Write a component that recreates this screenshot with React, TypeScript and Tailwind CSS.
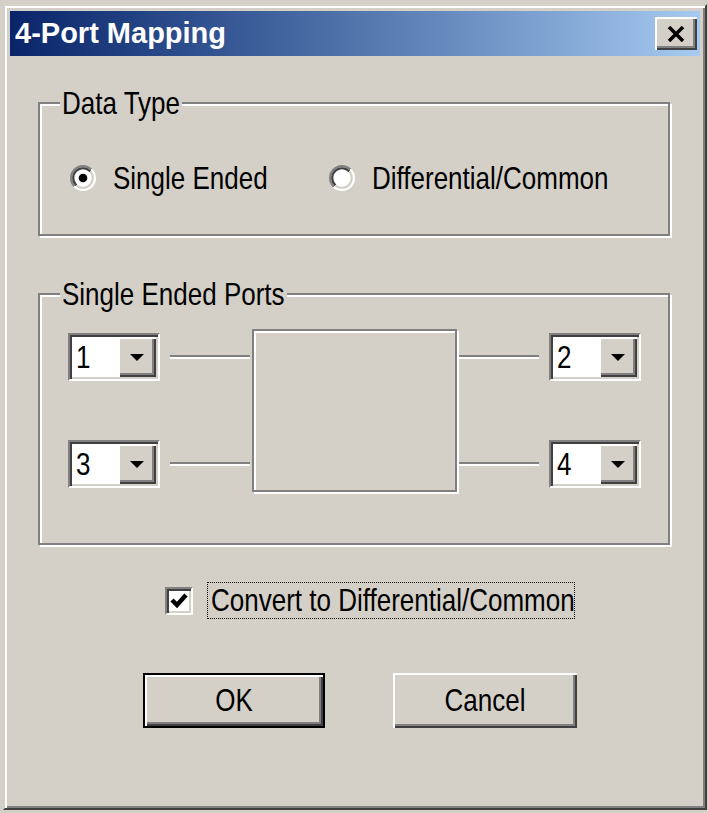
import React from 'react';

const txt = "inline-block scale-y-[1.22]";

function Radio({ checked }: { checked: boolean }) {
  return (
    <svg width="26" height="26" viewBox="0 0 12 12" className="shrink-0">
      <defs>
        <linearGradient id="ro" x1="0" y1="0" x2="1" y2="1">
          <stop offset="0.5" stopColor="#808080" />
          <stop offset="0.5" stopColor="#ffffff" />
        </linearGradient>
        <linearGradient id="ri" x1="0" y1="0" x2="1" y2="1">
          <stop offset="0.5" stopColor="#404040" />
          <stop offset="0.5" stopColor="#d4d0c8" />
        </linearGradient>
      </defs>
      <circle cx="6" cy="6" r="5.5" fill="#fff" stroke="url(#ro)" strokeWidth="1" />
      <circle cx="6" cy="6" r="4.5" fill="#fff" stroke="url(#ri)" strokeWidth="1" />
      {checked && <circle cx="6" cy="6" r="2" fill="#000" />}
    </svg>
  );
}

function Group({ label, className, children }: { label: string; className: string; children: React.ReactNode }) {
  return (
    <div className={"relative border-2 border-[#808080] shadow-[inset_2px_2px_0_#fff,2px_2px_0_#fff] " + className}>
      <span className="absolute left-[20px] top-[-16px] bg-[#d4d0c8] px-[2px] leading-[30px]">
        <span className={txt}>{label}</span>
      </span>
      {children}
    </div>
  );
}

function Combo({ value }: { value: string }) {
  return (
    <div className="flex w-[92px] h-[48px] border-2 border-t-[#808080] border-l-[#808080] border-r-white border-b-white bg-white shadow-[inset_2px_2px_0_#404040,inset_-2px_-2px_0_#d4d0c8] p-[2px]">
      <div className="flex-1 flex items-center pl-[4px] leading-none">
        <span className={txt}>{value}</span>
      </div>
      <div className="w-[38px] flex items-center justify-center bg-[#d4d0c8] shadow-[inset_2px_2px_0_#fff,inset_-2px_-2px_0_#404040,inset_-4px_-4px_0_#808080]">
        <svg width="14" height="7" viewBox="0 0 14 7">
          <polygon points="0,0 14,0 7,7" fill="#000" />
        </svg>
      </div>
    </div>
  );
}

function Line() {
  return <div className="w-[80px] h-[4px] border-t-2 border-[#808080] border-b-2 border-b-white" />;
}

export default function App() {
  return (
    <div className="w-[708px] h-[813px] bg-[#d4d0c8] pt-[4px] pl-[3px] font-['Liberation_Sans',Arial,sans-serif] text-[26px] text-black">
      <div className="w-[704px] h-[806px] border-2 border-t-[#d4d0c8] border-l-[#d4d0c8] border-r-[#404040] border-b-[#404040] shadow-[inset_2px_2px_0_#fff,inset_-2px_-2px_0_#808080] p-[5px] flex flex-col">
        {/* title bar */}
        <div className="h-[45px] flex items-center justify-between bg-linear-to-r from-[#0a246a] to-[#a6caf0] pl-[5px] pr-[3px]">
          <span className="text-white font-bold text-[29px] leading-none">4-Port Mapping</span>
          <div className="w-[42px] h-[33px] flex items-center justify-center bg-[#d4d0c8] shadow-[inset_2px_2px_0_#fff,inset_-2px_-2px_0_#404040,inset_-4px_-4px_0_#808080]">
            <svg width="18" height="16" viewBox="0 0 18 16">
              <path d="M2 1 L16 15 M16 1 L2 15" stroke="#000" strokeWidth="3.5" />
            </svg>
          </div>
        </div>

        <Group label="Data Type" className="ml-[28px] mt-[46px] w-[632px] h-[134px] pt-[59px] pl-[30px]">
          <div className="flex items-center h-[30px]">
            <div className="w-[259px] flex items-center gap-[17px]">
              <Radio checked />
              <span className={txt}>Single Ended</span>
            </div>
            <div className="flex items-center gap-[17px]">
              <Radio checked={false} />
              <span className={txt}>Differential/Common</span>
            </div>
          </div>
        </Group>

        <Group label="Single Ended Ports" className="ml-[28px] mt-[57px] w-[632px] h-[252px] pt-[34px] pl-[28px]">
          <div className="flex items-center">
            <div className="flex flex-col gap-[59px]">
              <div className="flex items-center gap-[10px]">
                <Combo value="1" />
                <Line />
              </div>
              <div className="flex items-center gap-[10px]">
                <Combo value="3" />
                <Line />
              </div>
            </div>
            <div className="ml-[2px] w-[205px] h-[163px] border-2 border-[#808080] shadow-[inset_2px_2px_0_#fff,2px_2px_0_#fff]" />
            <div className="ml-[2px] flex flex-col gap-[59px]">
              <div className="flex items-center gap-[10px]">
                <Line />
                <Combo value="2" />
              </div>
              <div className="flex items-center gap-[10px]">
                <Line />
                <Combo value="4" />
              </div>
            </div>
          </div>
        </Group>

        <div className="ml-[155px] mt-[37px] flex items-center gap-[14px]">
          <div className="w-[28px] h-[28px] flex items-center justify-center border-2 border-t-[#808080] border-l-[#808080] border-r-white border-b-white bg-white shadow-[inset_2px_2px_0_#404040,inset_-2px_-2px_0_#d4d0c8]">
            <svg width="18" height="16" viewBox="0 0 18 16">
              <path d="M2 7 L7 12 L16 2" stroke="#000" strokeWidth="4.5" fill="none" />
            </svg>
          </div>
          <div className="w-[368px] h-[37px] border border-dotted border-black overflow-hidden whitespace-nowrap pl-[3px] flex items-center">
            <span className={txt}>Convert to Differential/Common</span>
          </div>
        </div>

        <div className="ml-[133px] mt-[54px] flex gap-[68px]">
          <div className="w-[182px] h-[55px] border-2 border-black flex items-center justify-center shadow-[inset_2px_2px_0_#fff,inset_-2px_-2px_0_#404040,inset_-4px_-4px_0_#808080]">
            <span className={txt}>OK</span>
          </div>
          <div className="w-[184px] h-[55px] flex items-center justify-center shadow-[inset_2px_2px_0_#fff,inset_-2px_-2px_0_#404040,inset_-4px_-4px_0_#808080]">
            <span className={txt}>Cancel</span>
          </div>
        </div>
      </div>
    </div>
  );
}
